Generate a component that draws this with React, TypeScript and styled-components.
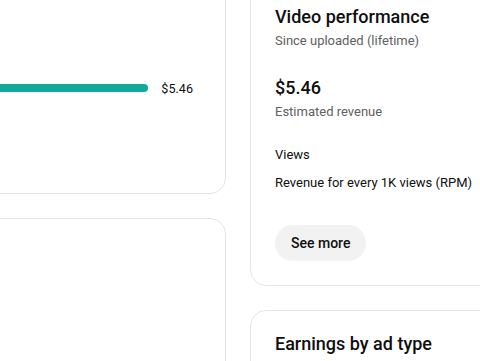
import React from "react";
import styled, { createGlobalStyle } from "styled-components";

const Global = createGlobalStyle`
  html, body { margin: 0; padding: 0; background: #fff; overflow: hidden; }
  body { font-family: Roboto, "Noto Sans", Arial, sans-serif; color: #0f0f0f; }
`;

const Page = styled.div`
  display: grid;
  grid-template-columns: 300px 280px;
  column-gap: 24px;
  margin-top: -20px;
  margin-left: -74px;
  width: 604px;
`;

const Column = styled.div`
  display: flex;
  flex-direction: column;
  gap: 24px;
`;

const Card = styled.section<{ $minH?: number; $padTop?: number; $padBottom?: number }>`
  border: 1px solid #e5e5e5;
  border-radius: 16px;
  padding: 24px;
  padding-top: ${(p) => p.$padTop ?? 24}px;
  padding-bottom: ${(p) => p.$padBottom ?? 24}px;
  background: #fff;
  min-height: ${(p) => (p.$minH ? `${p.$minH}px` : "auto")};
  box-sizing: border-box;
`;

const ChartArea = styled.div`
  height: 164px;
  display: flex;
  flex-direction: column;
  justify-content: center;
  padding-right: 8px;
  padding-top: 2px;
  box-sizing: border-box;
`;

const BarRow = styled.div`
  display: flex;
  align-items: center;
  gap: 13px;
`;

const Bar = styled.div`
  flex: 1;
  height: 8px;
  border-radius: 4px;
  background: #12a99a;
`;

const BarLabel = styled.span`
  font-size: 12.6px;
  color: #0f0f0f;
`;

const Title = styled.h2`
  margin: 0;
  font-size: 18px;
  line-height: 24px;
  font-weight: 500;
`;

const Sub = styled.div`
  font-size: 13px;
  line-height: 20px;
  color: #606060;
  margin-top: 2px;
`;

const Metric = styled.div`
  margin-top: 25px;
  font-size: 18px;
  line-height: 24px;
  font-weight: 500;
`;

const Row = styled.div<{ $top: number }>`
  font-size: 13px;
  line-height: 20px;
  margin-top: ${(p) => p.$top}px;
`;

const Button = styled.button`
  margin-top: 32px;
  height: 36px;
  padding: 0 16px;
  border: none;
  border-radius: 18px;
  background: #f2f2f2;
  font-family: Roboto, Arial, sans-serif;
  font-size: 14px;
  font-weight: 500;
  color: #0f0f0f;
`;

export default function App() {
  return (
    <>
      <Global />
      <Page>
        <Column>
          <Card>
            <ChartArea>
              <BarRow>
                <Bar />
                <BarLabel>$5.46</BarLabel>
              </BarRow>
            </ChartArea>
          </Card>
          <Card $minH={300} />
        </Column>
        <Column>
          <Card $padBottom={24}>
            <Title>Video performance</Title>
            <Sub>Since uploaded (lifetime)</Sub>
            <Metric>$5.46</Metric>
            <Sub>Estimated revenue</Sub>
            <Row $top={23}>Views</Row>
            <Row $top={8}>Revenue for every 1K views (RPM)</Row>
            <Button>See more</Button>
          </Card>
          <Card $minH={200} $padTop={21}>
            <Title>Earnings by ad type</Title>
          </Card>
        </Column>
      </Page>
    </>
  );
}
